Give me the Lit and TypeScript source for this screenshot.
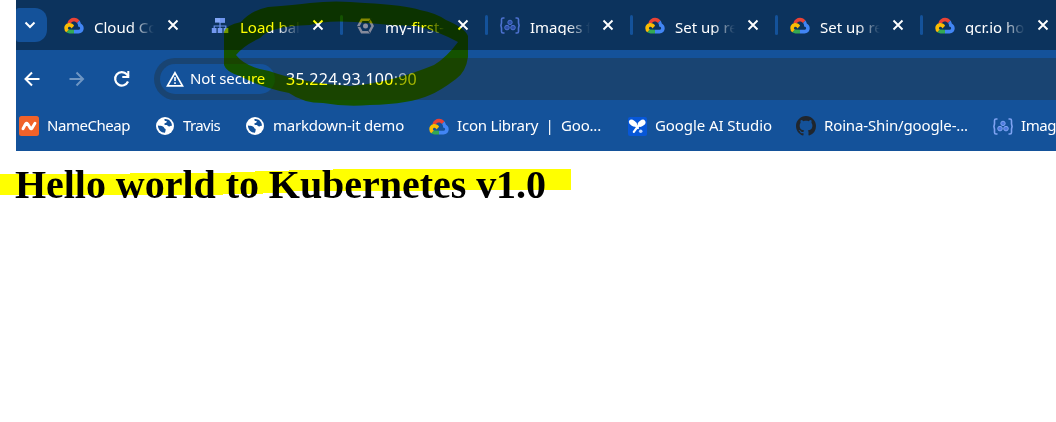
import { LitElement, html, css } from 'lit';
import { customElement } from 'lit/decorators.js';
import { styleMap } from 'lit/directives/style-map.js';

const cloud = html`<svg width="20" height="17" viewBox="0 0 20 17">
  <path d="M3.3 6.2C4.3 2.6 7 .7 10 .7c2.3 0 4.3 1.1 5.5 2.9l-2.5 2.3C12.300 5 11.300 4.400 10 4.400 8.500 4.400 7.600 5 6.900 6z" fill="#ea4335"/>
  <path d="M13 5.900 15.500 3.600c.7.900 1.100 1.900 1.300 3C18.700 7.700 19.700 9.300 19.700 11.200c0 3-2.200 5.200-5.200 5.200H10v-3.700h4.500c1 0 1.600-.7 1.600-1.500 0-1-.8-1.600-2-1.700 0-1.500-.2-2.600-1.100-3.600z" fill="#4285f4"/>
  <path d="M10 12.700v3.700H5.500c-1.200 0-2.300-.4-3.200-1.100l2.600-2.700z" fill="#34a853"/>
  <path d="M2.300 15.300A5.200 5.200 0 0 1 .3 11.200C.3 8.200 2.500 6 5.500 6c2 0 3.700 1 4.600 2.800L7.400 11.500C7 10.400 6.400 9.700 5.500 9.700c-.9 0-1.600.7-1.600 1.500 0 .6.400 1.200 1 1.400z" fill="#fbbc04"/>
</svg>`;
const balancer = html`<svg width="18" height="17" viewBox="0 0 18 17">
  <path d="M9 5v6M3.200 11.500V9h11.600v2.500" fill="none" stroke="#6b93ee" stroke-width="1.200"/>
  <path d="M4 1h10v4.600H4z" fill="#82a6f5"/><path d="M9 1h5v4.600H9z" fill="#6f95ee"/>
  <path d="M.8 11H5.500V16H.8zM6.700 11h4.700V16H6.700zM12.600 11h4.700V16h-4.700z" fill="#7398ef"/>
</svg>`;
const hexagon = html`<svg width="17" height="16" viewBox="0 0 17 16">
  <path d="M4.800 1.700h7.400L15.600 8l-3.400 6.300H4.800L1.400 8z" fill="none" stroke="#858a9b" stroke-width="2.500"/>
  <path d="M11.500 4.500 14 .5M3 8.500H0M11 12l2 3.500" stroke="#27405f" stroke-width="1"/>
  <circle cx="8.500" cy="8" r="2.500" fill="#8b8fa0"/>
</svg>`;
const bracket = (c: string, d: string) => html`<svg width="20" height="17" viewBox="0 0 20 17">
  <path d="M4.500 1H3Q1.500 1 1.500 2.500v3.500L.9 8.500l.6 2.500v3.500Q1.500 16 3 16h1.500M15.500 1H17q1.500 0 1.500 1.500v3.500l.6 2.500-.6 2.500v3.500Q18.500 16 17 16h-1.500" fill="none" stroke="${c}" stroke-width="1.600"/>
  <g fill="${d}" stroke="${c}" stroke-width="1"><circle cx="10" cy="5.400" r="2.200"/><circle cx="7" cy="10.600" r="2.300"/><circle cx="13" cy="10.600" r="2.300"/></g>
</svg>`;
const globe = html`<svg width="20" height="20" viewBox="0 0 20 20"><circle cx="10" cy="10" r="9" fill="#fff"/>
  <path d="M2.900 9.500c2.200.3 3.600.2 5 .9 1.300.6 1.200 2 2.300 2.400.9.400.4 1.800-.2 3.900-3.900.1-7-3-7.100-7.200zM9.500 3c-.3 1.500.4 2.200 1.600 2 .9-.2.900 1.200.1 1.700-.9.600-2.100.5-1.900 1.500.2.900 1.600.5 2.600.9 1 .5 1.200 1.500 2.400 1.400 1-.1 1.500-.9 2.700-.7C16.900 5.500 13.600 2.500 9.500 3z" fill="#14529a"/></svg>`;
const cheap = html`<svg width="20" height="20" viewBox="0 0 20 20"><rect width="20" height="20" rx="2.500" fill="#f0622a"/><path d="M4 12.800 6.700 7.800Q7.600 6.500 8.600 7.800l2.600 4.300q1 1.400 1.900 0L16 7.200" fill="none" stroke="#fff" stroke-width="2.900" stroke-linecap="round" stroke-linejoin="round"/></svg>`;
const studio = html`<svg width="19" height="19" viewBox="0 0 19 19"><rect width="19" height="19" rx="2" fill="#0757d8"/>
  <ellipse cx="5" cy="6.200" rx="4.500" ry="2.800" fill="#fff" transform="rotate(35 5 6.200)"/><ellipse cx="13.600" cy="6.300" rx="4.300" ry="2.900" fill="#fff" transform="rotate(-38 13.600 6.300)"/>
  <path d="M10.500 8.500 5.800 14.800M8 9l2 2" stroke="#fff" stroke-width="2.200" stroke-linecap="round"/><circle cx="12.700" cy="14.300" r="1.800" fill="#b9d3ff"/></svg>`;
const octocat = html`<svg width="20" height="20" viewBox="0 0 16 16"><path fill="#20262d" d="M8 0C3.580 0 0 3.580 0 8c0 3.540 2.290 6.530 5.470 7.590.4.070.55-.17.55-.38 0-.19-.01-.82-.01-1.490-2.010.37-2.530-.49-2.690-.94-.09-.23-.48-.94-.82-1.130-.28-.15-.68-.52-.01-.53.63-.01 1.080.58 1.230.82.72 1.210 1.870.87 2.330.66.07-.52.28-.87.51-1.070-1.780-.2-3.640-.89-3.640-3.950 0-.87.31-1.590.82-2.150-.08-.2-.36-1.020.08-2.120 0 0 .67-.21 2.200.82.64-.18 1.320-.27 2-.27s1.360.09 2 .27c1.530-1.040 2.200-.82 2.200-.82.44 1.100.16 1.920.08 2.120.51.56.82 1.270.82 2.150 0 3.070-1.870 3.750-3.650 3.950.29.25.54.73.54 1.480 0 1.070-.01 1.930-.01 2.200 0 .21.15.46.55.38A8.010 8.010 0 0 0 16 8c0-4.420-3.580-8-8-8z"/></svg>`;
const close = html`<svg width="12" height="12" viewBox="0 0 12 12"><path d="M1.500 1.500l9 9M10.500 1.500l-9 9" stroke="#fff" stroke-width="1.900"/></svg>`;

const tabs = [
  { icon: cloud, text: 'Cloud Co' },
  { icon: balancer, text: 'Load bal' },
  { icon: hexagon, text: 'my-first-' },
  { icon: bracket('#4d72cf', '#2c4fa8'), text: 'Images f' },
  { icon: cloud, text: 'Set up re' },
  { icon: cloud, text: 'Set up re' },
  { icon: cloud, text: 'gcr.io ho' },
];
const marks = [
  { icon: cheap, text: 'NameCheap', w: 136, tw: 83 },
  { icon: globe, text: 'Travis', w: 90, tw: 37 },
  { icon: globe, text: 'markdown-it demo', w: 184, tw: 131 },
  { icon: cloud, text: 'Icon Library  |  Goo...', w: 198, tw: 144 },
  { icon: studio, text: 'Google AI Studio', w: 169, tw: 117 },
  { icon: octocat, text: 'Roina-Shin/google-...', w: 197, tw: 144 },
  { icon: bracket('#7fa3f2', '#4f7be0'), text: 'Images', w: 90, tw: 50 },
];

@customElement('app-root')
export class AppRoot extends LitElement {
  static styles = css`
    :host { display: block; position: relative; width: 1056px; height: 422px; overflow: hidden; background: #fff; isolation: isolate; font-family: "Noto Sans", sans-serif; color: #fff; }
    svg { display: block; flex: none; }
    .browser { margin-left: 16px; width: 1040px; height: 151px; background: #14529a; overflow: hidden; }
    .strip { height: 50px; background: #0c335d; display: flex; overflow: hidden; }
    .search { width: 31px; height: 34px; margin-top: 8px; padding-right: 4px; box-sizing: border-box; border-radius: 3px 12px 12px 3px; background: #14529a; display: grid; place-items: center; flex: none; }
    .tabs { display: flex; padding-left: 7px; }
    .tab { width: 145px; height: 50px; flex: none; box-sizing: border-box; display: flex; }
    .tab:first-child { width: 146px; }
    .fav { width: 20px; height: 17px; margin: 17px 0 0 10px; display: grid; place-items: center; flex: none; }
    .title { margin: 17px 0 0 10px; width: 60px; height: 18px; line-height: 21px; overflow: hidden; white-space: pre; font-size: 15px; -webkit-mask-image: linear-gradient(90deg, #000 62%, transparent 100%); flex: none; }
    .x { margin: 19px 0 0 12px; }
    .tab:first-child .x { margin-left: 13px; }
    .sep { width: 3px; height: 20px; margin: 15px 0 0 16px; border-radius: 2px; background: #14529a; flex: none; }
    .sep.off { visibility: hidden; }
    .nav { height: 58px; display: flex; align-items: center; }
    .buttons { width: 138px; display: flex; gap: 25px; padding-left: 6px; box-sizing: border-box; flex: none; }
    .omni { flex: none; width: 930px; height: 42px; border-radius: 21px; background: #194472; display: flex; align-items: center; }
    .chip { margin-left: 6px; width: 115px; height: 30px; border-radius: 15px; background: #14529a; display: flex; align-items: center; font-size: 15px; line-height: 20px; }
    .chip svg { margin: 0 6px 0 6px; }
    .chip span { margin-top: -2px; }
    .url { margin-left: 11px; font-size: 16px; white-space: pre; }
    .port { color: #a3b4c8; }
    .marks { display: flex; height: 36px; align-items: center; padding-left: 3px; font-size: 15px; }
    .mark { display: flex; align-items: center; flex: none; }
    .ico { width: 20px; display: grid; place-items: center; margin-right: 8px; }
    .label { white-space: pre; line-height: 20px; margin-top: -2px; }
    h1 { margin: 11px 0 0 15px; font: bold 40px/46px "Liberation Serif", serif; color: #000; white-space: nowrap; }
    .ink { position: absolute; inset: 0; mix-blend-mode: multiply; pointer-events: none; }
  `;

  firstUpdated() {
    this.fit();
  }

  /* Spread letter spacing so every label fills its allotted width. */
  fit() {
    this.renderRoot.querySelectorAll<HTMLElement>('[data-w]').forEach((el) => {
      const n = (el.textContent ?? '').length;
      const natural = el.getBoundingClientRect().width;
      el.style.letterSpacing = `${(Number(el.dataset.w) - natural) / n}px`;
    });
  }

  render() {
    return html`
      <div class="browser">
        <div class="strip">
          <div class="search"><svg width="12" height="8" viewBox="0 0 12 8"><path d="M1.500 1.500 6 6l4.500-4.500" fill="none" stroke="#fff" stroke-width="2"/></svg></div>
          <div class="tabs">${tabs.map((t, i) => html`<div class="tab"><span class="fav">${t.icon}</span><span class="title">${t.text}</span><span class="x">${close}</span><i class="sep ${i < 1 ? 'off' : ''}"></i></div>`)}</div>
        </div>
        <div class="nav">
          <div class="buttons">
            <svg width="20" height="20" viewBox="0 0 20 20"><path d="M17.500 10H4M10 3.500 3.500 10l6.500 6.500" fill="none" stroke="#fff" stroke-width="2"/></svg>
            <svg width="20" height="20" viewBox="0 0 20 20"><path d="M2.500 10h13M9.500 3.500 16 10l-6.500 6.500" fill="none" stroke="#6f96c3" stroke-width="2"/></svg>
            <svg width="20" height="20" viewBox="0 0 20 20"><path d="M16 12.500A6.700 6.700 0 1 1 14.800 5.300L16.500 7.500" fill="none" stroke="#fff" stroke-width="2.200"/><path d="M17.300 2v7h-7V7h5V2z" fill="#fff"/></svg>
          </div>
          <div class="omni">
            <div class="chip"><svg width="18" height="16" viewBox="0 0 18 16"><path d="M9 1.800 16.500 14.800H1.500z" fill="none" stroke="#fff" stroke-width="1.700"/><path d="M9 6v4M9 11.300v1.800" stroke="#fff" stroke-width="1.600"/></svg><span data-w="75">Not secure</span></div>
            <span class="url" data-w="131">35.224.93.100<span class="port">:90</span></span>
          </div>
        </div>
        <div class="marks">${marks.map((m) => html`<div class="mark" style=${styleMap({ width: m.w + 'px' })}><span class="ico">${m.icon}</span><span class="label" data-w=${m.tw}>${m.text}</span></div>`)}</div>
      </div>
      <h1><span data-w="531">Hello world to Kubernetes v1.0</span></h1>
      <svg class="ink" width="1056" height="422" viewBox="0 0 1056 422" fill="#ff0" fill-rule="evenodd">
        <path d="M0 174H130V173H231V172H255V171H289V170H333V169H571V190H434V191H290V193H263V194H223V195H0Z"/>
        <path d="M224 32Q226 25 241 22Q252 10 268 7Q295 5 310 3Q335 0 365 3Q405 5 420 10Q436 13 446 20Q465 28 468 36V57Q466 72 456 79Q440 91 430 95Q410 104 370 105Q345 107 323 103Q303 103 289 93Q260 87 240 76Q226 72 224 65ZM236 55Q245 67 269 71Q303 83 350 86Q390 83 434 65Q447 57 458 42Q440 32 417 26Q385 25 355 22Q325 20 310 25Q270 26 260 38Q243 46 236 55Z"/>
      </svg>`;
  }
}
